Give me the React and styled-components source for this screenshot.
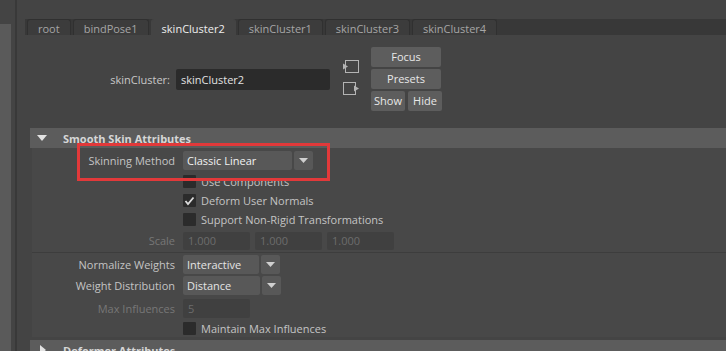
import React from 'react'
import styled, { createGlobalStyle } from 'styled-components'

const GlobalStyle = createGlobalStyle`
  html, body { margin:0; padding:0; background:#444; }
  body {
    font-family:"Open Sans", "Noto Sans", sans-serif;
    font-size:11px;
    color:#c4c4c4;
  }
  * { box-sizing:border-box; }
`

let Page = styled.div`
 position:relative;
 display:flex;
 width:726px;
 height:351px;
 overflow:hidden;
 background:#444;
`
let Dock = styled.div`
 width:11px;
 margin-right:4px;
 padding-top:24px;
 display:flex;
 .panel{
     flex:1;
     background:#5a5a5a;
 }
`
let Splitter = styled.div`
 width:2px;
 background:#393939;
`
let Main = styled.div`
 flex:1;
 min-width:0;
 display:flex;
 flex-direction:column;
 padding:19px 0 0 8px;
`
let TabBar = styled.div`
 display:flex;
 align-items:flex-end;
 gap:2px;
 height:18px;
 padding-left:2px;
 background:#383838;
`
let Tab = styled.div`
 display:flex;
 align-items:center;
 height:16px;
 padding:2px 10px 0;
 border:1px solid ${p => p.$active ? '#444' : '#303030'};
 border-bottom:none;
 border-radius:3px 3px 0 0;
 background:${p => p.$active ? '#444' : '#3c3c3c'};
 color:${p => p.$active ? '#eeeeee' : '#a6a6a6'};
 white-space:nowrap;
`
let NodeRow = styled.div`
 display:flex;
 align-items:center;
 padding-top:12px;
`
let NodeLabel = styled.div`
 width:145px;
 text-align:right;
 color:#c8c8c8;
`
let NameField = styled.div`
 width:154px;
 height:21px;
 margin-left:6px;
 padding-left:5px;
 line-height:21px;
 border-radius:2px;
 background:#2b2b2b;
 color:#e2e2e2;
`
let IconColumn = styled.div`
 display:flex;
 flex-direction:column;
 gap:8px;
 margin-left:13px;
 margin-top:-3px;
 svg{ display:block; }
`
let ButtonColumn = styled.div`
 display:flex;
 flex-direction:column;
 gap:2px;
 width:71px;
 margin-left:12px;
 .pair{
     display:flex;
     gap:3px;
 }
`
let Button = styled.div`
 width:${p => p.$w || 70}px;
 height:20px;
 line-height:20px;
 text-align:center;
 border-radius:2px;
 background:#5d5d5d;
 color:#e8e8e8;
`
let Section = styled.div`
 margin:${p => p.$mt || 0}px 0 0 5px;
`
let SectionHeader = styled.div`
 display:flex;
 align-items:center;
 height:20px;
 padding-left:${p => p.$open ? 7 : 10}px;
 background:#5c5c5c;
 color:#d6d6d6;
 font-weight:700;
 .caret{
     width:${p => p.$open ? 26 : 23}px;
     display:flex;
 }
`
let SectionBody = styled.div`
 display:flex;
 flex-direction:column;
 margin-left:2px;
 padding:1px 0 2px;
 background:#484848;
`
let Row = styled.div`
 display:flex;
 align-items:center;
 height:${p => p.$h}px;
`
let Label = styled.div`
 width:151px;
 padding-right:8px;
 text-align:right;
 color:${p => p.$dim ? '#777' : '#c4c4c4'};
 white-space:nowrap;
`
let Dropdown = styled.div`
 display:flex;
 gap:2px;
 .value{
     width:${p => p.$w}px;
     height:19px;
     line-height:19px;
     padding-left:4px;
     border-radius:2px;
     background:#585858;
     color:${p => p.$bright ? '#f2f2f2' : '#e4e4e4'};
 }
 .arrow{
     width:19px;
     height:19px;
     border-radius:2px;
     background:#585858;
     display:flex;
     align-items:center;
     justify-content:center;
 }
`
let NumField = styled.div`
 width:67px;
 height:${p => p.$h || 18}px;
 line-height:${p => p.$h || 18}px;
 padding-left:5px;
 border-radius:2px;
 background:#404040;
 color:#6c6c6c;
`
let FieldGroup = styled.div`
 display:flex;
 gap:5px;
`
let Check = styled.label`
 display:flex;
 align-items:center;
 gap:5px;
 color:#c4c4c4;
 .box{
     width:13px;
     height:13px;
     border-radius:1px;
     background:#2b2b2b;
     display:flex;
     align-items:center;
     justify-content:center;
 }
`
let Divider = styled.div`
 height:1px;
 background:#3d3d3d;
`
let Highlight = styled.div`
 position:absolute;
 left:77px;
 top:143px;
 width:253px;
 height:38px;
 border:3px solid #e2393a;
 pointer-events:none;
`

function Arrow() {
  return (
    <svg width="9" height="5" viewBox="0 0 9 5">
      <polygon points="0,0 9,0 4.5,5" fill="#cfcfcf" />
    </svg>
  )
}

function Checkbox({ checked, children }) {
  return (
    <Check>
      <span className='box'>
        {checked && (
          <svg width="11" height="10" viewBox="0 0 11 10">
            <polyline points="1.5,5 4,8 9.5,1.5" fill="none" stroke="#dcdcdc" strokeWidth="1.8" />
          </svg>
        )}
      </span>
      {children}
    </Check>
  )
}

function Select({ value, w, bright }) {
  return (
    <Dropdown $w={w} $bright={bright}>
      <div className='value'>{value}</div>
      <div className='arrow'><Arrow /></div>
    </Dropdown>
  )
}

const tabs = ['root', 'bindPose1', 'skinCluster2', 'skinCluster1', 'skinCluster3', 'skinCluster4']

export default function App() {
  return (
    <Page>
      <GlobalStyle />
      <Dock><div className='panel' /></Dock>
      <Splitter />
      <Main>
        <TabBar>
          {tabs.map(t => <Tab key={t} $active={t === 'skinCluster2'}>{t}</Tab>)}
        </TabBar>

        <NodeRow>
          <NodeLabel>skinCluster:</NodeLabel>
          <NameField>skinCluster2</NameField>
          <IconColumn>
            <svg width="16" height="14" viewBox="0 0 16 14">
              <rect x="2.5" y="0.5" width="13" height="12" fill="none" stroke="#b4b4b4" />
              <polygon points="0,3.5 5,6.5 0,9.5" fill="#b4b4b4" />
            </svg>
            <svg width="16" height="14" viewBox="0 0 16 14">
              <rect x="0.5" y="0.5" width="12" height="12" fill="none" stroke="#b4b4b4" />
              <polygon points="11,3.5 16,6.5 11,9.5" fill="#b4b4b4" />
            </svg>
          </IconColumn>
          <ButtonColumn>
            <Button>Focus</Button>
            <Button>Presets</Button>
            <div className='pair'>
              <Button $w={34}>Show</Button>
              <Button $w={34}>Hide</Button>
            </div>
          </ButtonColumn>
        </NodeRow>

        <Section $mt={17}>
          <SectionHeader $open>
            <span className='caret'>
              <svg width="10" height="6" viewBox="0 0 10 6">
                <polygon points="0,0 10,0 5,6" fill="#e2e2e2" />
              </svg>
            </span>
            Smooth Skin Attributes
          </SectionHeader>
          <SectionBody>
            <Row $h={23}>
              <Label>Skinning Method</Label>
              <Select value="Classic Linear" w={109} bright />
            </Row>
            <Row $h={19}>
              <Label />
              <Checkbox>Use Components</Checkbox>
            </Row>
            <Row $h={19}>
              <Label />
              <Checkbox checked>Deform User Normals</Checkbox>
            </Row>
            <Row $h={19}>
              <Label />
              <Checkbox>Support Non-Rigid Transformations</Checkbox>
            </Row>
            <Row $h={23}>
              <Label $dim>Scale</Label>
              <FieldGroup>
                <NumField>1.000</NumField>
                <NumField>1.000</NumField>
                <NumField>1.000</NumField>
              </FieldGroup>
            </Row>
            <Divider />
            <Row $h={22}>
              <Label>Normalize Weights</Label>
              <Select value="Interactive" w={76} />
            </Row>
            <Row $h={21}>
              <Label>Weight Distribution</Label>
              <Select value="Distance" w={77} />
            </Row>
            <Row $h={25}>
              <Label $dim>Max Influences</Label>
              <NumField $h={19}>5</NumField>
            </Row>
            <Row $h={14}>
              <Label />
              <Checkbox>Maintain Max Influences</Checkbox>
            </Row>
          </SectionBody>
        </Section>

        <Section $mt={3}>
          <SectionHeader>
            <span className='caret'>
              <svg width="6" height="10" viewBox="0 0 6 10">
                <polygon points="0,0 6,5 0,10" fill="#e2e2e2" />
              </svg>
            </span>
            Deformer Attributes
          </SectionHeader>
        </Section>
      </Main>
      <Highlight />
    </Page>
  )
}
